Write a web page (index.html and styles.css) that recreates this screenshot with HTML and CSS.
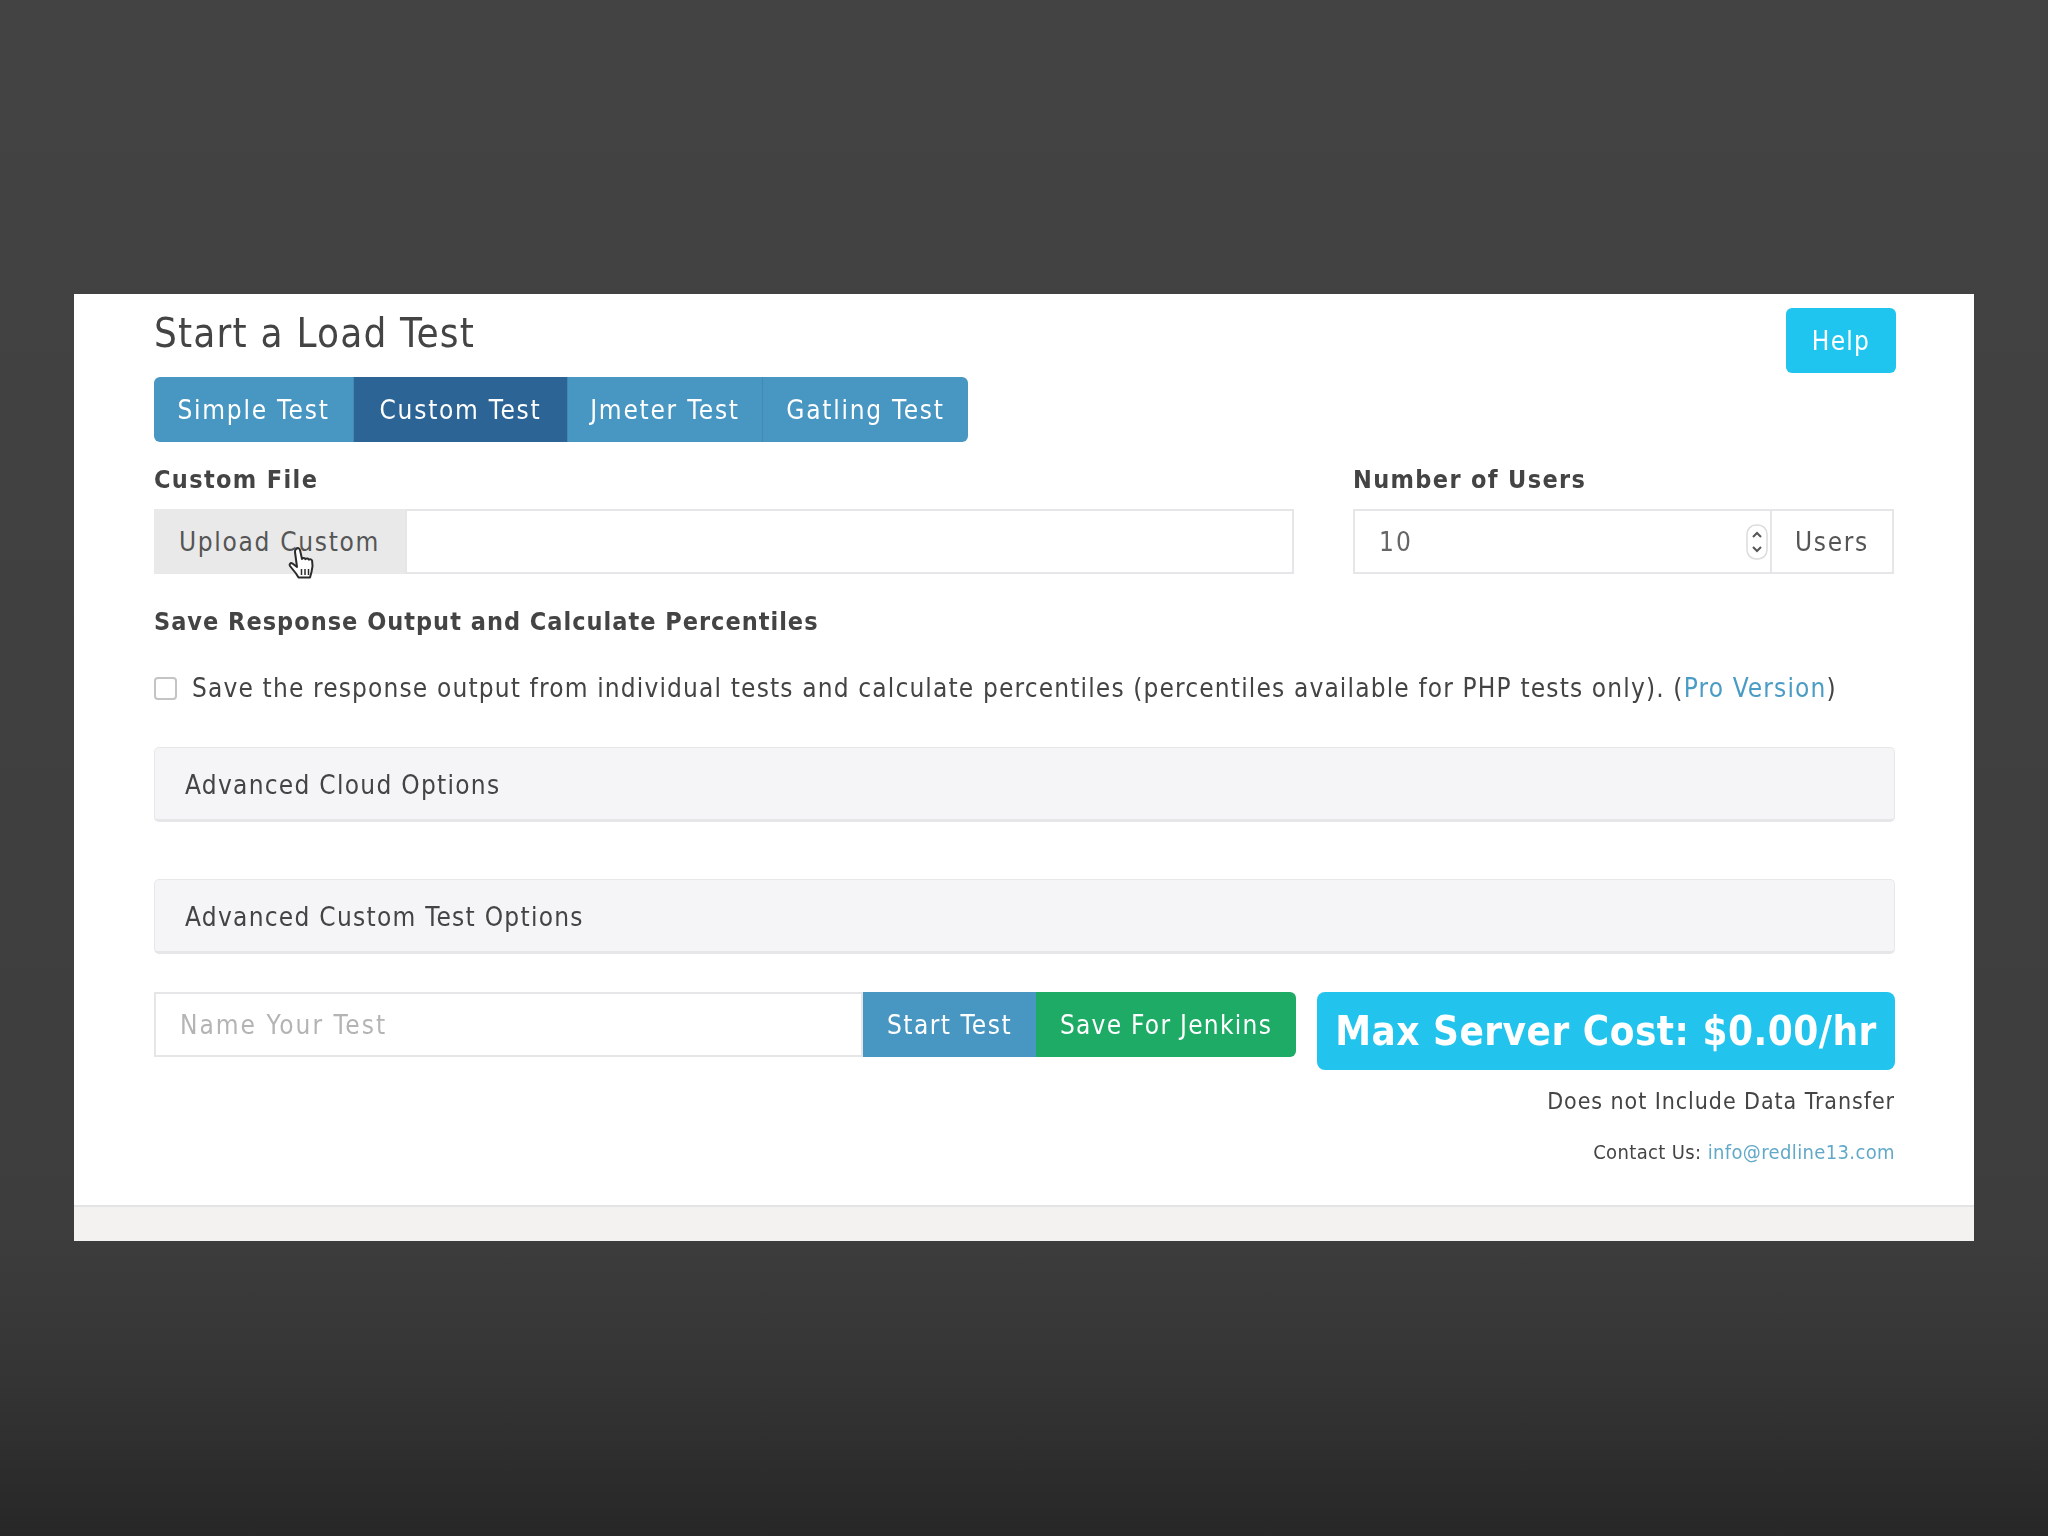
FILE: index.html
```html
<!DOCTYPE html>
<html lang="en">
<head>
  <meta charset="UTF-8" />
  <title>Start a Load Test</title>
  <link rel="stylesheet" href="styles.css">
</head>
<body>

  <main class="panel">
    <section class="content">
      <div class="title-row">
        <h1>Start a Load Test</h1>
        <a class="btn btn-help" href="#">Help</a>
      </div>

      <div class="tabs">
        <a class="tab tab-simple" href="#">Simple Test</a>
        <a class="tab tab-custom active" href="#">Custom Test</a>
        <a class="tab tab-jmeter" href="#">Jmeter Test</a>
        <a class="tab tab-gatling" href="#">Gatling Test</a>
      </div>

      <div class="field-row">
        <div class="field field-file">
          <label class="field-label">Custom File</label>
          <div class="input-group">
            <span class="addon addon-upload">Upload Custom</span>
            <input class="text-input" type="text" />
            <!-- hand cursor, caught in the recording -->
            <svg class="hand-cursor" width="30" height="36" viewBox="0 0 30 36">
              <path d="M9 3c1.600-1.600 3.500-.8 4 1l2 9c1-1.400 2.800-1.200 3.500.2 1-1.100 2.800-.9 3.400.5 1.100-.8 2.800-.4 3.200 1.100.8 3.700.5 8-.6 11.200l-1.500 5.500H11.500L9 27.500 3 20c-1.200-1.700.6-3.600 2.500-2.500L10 21 8 6c-.1-1.200.300-2.300 1-3z" fill="#fff" stroke="#2b2b2b" stroke-width="2" stroke-linejoin="round"/>
              <path d="M14.500 23v6M18 23v6M21.500 23v6" stroke="#2b2b2b" stroke-width="1.500" fill="none"/>
            </svg>
          </div>
        </div>
        <div class="field field-users">
          <label class="field-label">Number of Users</label>
          <div class="input-group">
            <div class="number-wrap">
              <input class="text-input" type="text" value="10" />
              <svg class="spinner" width="22" height="36" viewBox="0 0 22 36">
                <rect x="1" y="1" width="20" height="34" rx="9" fill="#fff" stroke="#dcdcdc" stroke-width="1.500"/>
                <path d="M7 13l4-4 4 4M7 23l4 4 4-4" fill="none" stroke="#555" stroke-width="2"/>
              </svg>
            </div>
            <span class="addon addon-users">Users</span>
          </div>
        </div>
      </div>

      <h2 class="section-heading">Save Response Output and Calculate Percentiles</h2>
      <label class="check-row">
        <input type="checkbox" />
        <span>Save the response output from individual tests and calculate percentiles (percentiles available for PHP tests only). (<a href="#">Pro Version</a>)</span>
      </label>

      <div class="well well-first">Advanced Cloud Options</div>
      <div class="well well-second">Advanced Custom Test Options</div>

      <div class="bottom-row">
        <div class="start-group">
          <input class="text-input name-input" type="text" placeholder="Name Your Test" />
          <a class="btn btn-start" href="#">Start Test</a>
          <a class="btn btn-jenkins" href="#">Save For Jenkins</a>
        </div>
        <div class="cost-col">
          <div class="cost-badge">Max Server Cost: $0.00/hr</div>
          <p class="cost-note">Does not Include Data Transfer</p>
          <p class="contact">Contact Us: <a href="#">info@redline13.com</a></p>
        </div>
      </div>
    </section>
    <footer class="panel-footer"></footer>
  </main>

</body>
</html>
```

FILE: styles.css
```css
* {
  box-sizing: border-box;
}
body {
  margin: 0;
  min-height: 1536px;
  padding: 294px 74px 0;
  background: linear-gradient(#434343, #3d3d3d 80%, #343434 90%, #272727);
  font-family: 'DejaVu Sans', sans-serif;
  font-stretch: condensed;
  font-size: 26px;
  letter-spacing: 1.27px;
  color: #444444;
}
a {
  text-decoration: none;
}

.panel {
  background-color: #ffffff;
  height: 947px;
  display: flex;
  flex-direction: column;
}
.content {
  flex: 1;
  padding: 14px 79px 0 80px;
  /* the reference is a video frame, everything is a bit soft */
  filter: blur(0.5px);
}
.panel-footer {
  height: 36px;
  background-color: #f4f2f1;
  border-top: 2px solid #e4e4e4;
}

.title-row {
  display: flex;
  justify-content: space-between;
  align-items: flex-start;
  height: 69px;
}
h1 {
  margin: 0;
  font-size: 40px;
  font-weight: 400;
  letter-spacing: 1.2px;
  line-height: 50px;
}

.btn {
  display: flex;
  align-items: center;
  justify-content: center;
  color: #ffffff;
}
.btn-help {
  width: 110px;
  height: 65px;
  margin-right: -1px;
  background-color: #1fc5ee;
  border-radius: 6px;
}

.tabs {
  display: flex;
  width: 814px;
  height: 65px;
  border-radius: 6px;
  overflow: hidden;
  background-color: #4896c2;
  letter-spacing: 1.75px;
}
.tab {
  display: flex;
  align-items: center;
  justify-content: center;
  color: #ffffff;
  border-right: 1px solid #4389b3;
}
.tab-simple { width: 200px; }
.tab-custom { width: 214px; }
.tab-jmeter { width: 195px; }
.tab-gatling { width: 205px; border-right: none; }
.tab.active {
  background-color: #2c6595;
}

.field-row {
  display: flex;
  justify-content: space-between;
  margin-top: 19px;
}
.field-file {
  width: 1140px;
}
.field-users {
  width: 541px;
  margin-right: 1px;
}
.field-label {
  display: block;
  height: 48px;
  line-height: 38px;
  font-weight: 700;
  font-size: 25px;
  letter-spacing: 1.35px;
}

.input-group {
  display: flex;
  height: 65px;
  position: relative;
}
.text-input {
  flex: 1;
  min-width: 0;
  width: 100%;
  height: 100%;
  padding: 0 24px;
  border: 2px solid #e6e6e8;
  background-color: #ffffff;
  font: inherit;
  letter-spacing: 2px;
  color: #666666;
  outline: none;
}
.text-input::placeholder {
  color: #b4b4b4;
}
.addon {
  display: flex;
  align-items: center;
  justify-content: center;
  flex-shrink: 0;
  color: #555555;
  letter-spacing: 1.7px;
}
.addon-upload {
  width: 251px;
  background-color: #e9e9ea;
}
.addon-users {
  width: 122px;
  border: 2px solid #e6e6e8;
  border-left: none;
}
.number-wrap {
  flex: 1;
  position: relative;
}
.spinner {
  position: absolute;
  right: 4px;
  top: 15px;
}
.hand-cursor {
  position: absolute;
  left: 133px;
  top: 37px;
}

.section-heading {
  margin: 29px 0 0;
  font-size: 25px;
  font-weight: 700;
  letter-spacing: 1px;
  line-height: 38px;
}
.check-row {
  display: flex;
  align-items: center;
  gap: 15px;
  margin-top: 28px;
  height: 38px;
  letter-spacing: 1.15px;
  white-space: nowrap;
}
.check-row input {
  width: 23px;
  height: 23px;
  margin: 0;
  appearance: none;
  background-color: #ffffff;
  border: 2px solid #c4c4c4;
  border-radius: 4px;
}
.check-row a {
  color: #4a9cc4;
}
.contact a {
  color: #62a9c9;
}

.well {
  height: 75px;
  padding: 2px 0 0 30px;
  display: flex;
  align-items: center;
  background-color: #f5f4f6;
  border: 1px solid #e8e8ea;
  border-bottom: 3px solid #e6e6e8;
  border-radius: 5px;
}
.well-first {
  margin-top: 40px;
}
.well-second {
  margin-top: 57px;
}

.bottom-row {
  display: flex;
  justify-content: space-between;
  margin-top: 38px;
}
.start-group {
  display: flex;
  width: 1142px;
  height: 65px;
}
.name-input {
  flex: 1;
}
.btn-start {
  width: 173px;
  background-color: #4896c2;
  letter-spacing: 1.5px;
}
.btn-jenkins {
  width: 260px;
  background-color: #1eab66;
  border-radius: 0 6px 6px 0;
}
.cost-col {
  width: 578px;
  text-align: right;
}
.cost-badge {
  height: 78px;
  line-height: 78px;
  text-align: center;
  background-color: #22c4ee;
  border-radius: 8px;
  color: #ffffff;
  font-size: 40px;
  font-weight: 700;
  letter-spacing: 0.5px;
  white-space: nowrap;
}
.cost-note {
  margin: 15px 0 0;
  font-size: 23px;
  letter-spacing: 0.93px;
  line-height: 32px;
}
.contact {
  margin: 21px 0 0;
  font-size: 20px;
  letter-spacing: 0.37px;
  line-height: 28px;
}
```
